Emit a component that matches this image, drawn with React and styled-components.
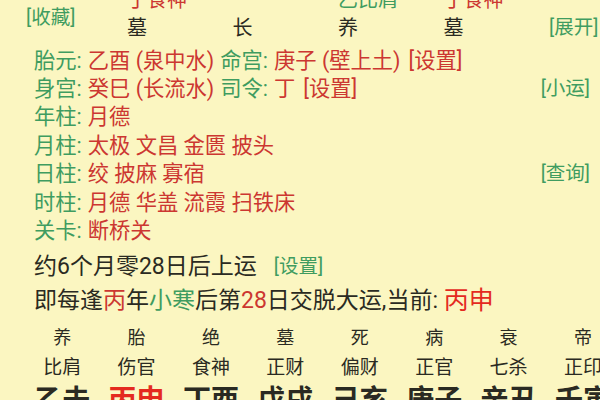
import React from "react";
import styled, { createGlobalStyle } from "styled-components";

const Global = createGlobalStyle`
  html, body { margin: 0; padding: 0; background: #fbf6c1; }
  body { font-family: Roboto, "Noto Sans CJK SC", sans-serif; overflow: hidden; }
`;

const C = {
  green: "#3f9c60",
  red: "#cc3731",
  bright: "#e42a1f",
  dark: "#2a2a22",
};

const Page = styled.div`
  width: 600px;
  height: 400px;
  overflow: hidden;
  background: #fbf6c1;
  color: ${C.dark};
`;

const Header = styled.div`
  display: grid;
  grid-template-columns: 127px repeat(4, 105.5px) 1fr;
  grid-template-rows: 28px 28px;
  margin-top: -14px;
  font-size: 20px;
  line-height: 28px;
`;

const Cell = styled.div`
  color: ${(p) => p.$color || C.dark};
  white-space: nowrap;
  grid-column: ${(p) => p.$col};
  grid-row: ${(p) => p.$row};
`;

const SideLink = styled.div`
  color: ${C.green};
  font-size: 19.5px;
  line-height: 28px;
  white-space: nowrap;
  grid-column: ${(p) => p.$col};
  grid-row: 1 / 3;
  align-self: end;
  justify-self: ${(p) => p.$justify};
  padding: ${(p) => p.$pad};
`;

const Info = styled.div`
  margin-top: 2px;
  display: flex;
  flex-direction: column;
`;

const Row = styled.div`
  display: flex;
  align-items: center;
  justify-content: space-between;
  height: 28.4px;
  padding: 0 10px 0 34px;
  font-size: 21.3px;
  white-space: nowrap;
`;

const Line = styled.div`
  display: flex;
  align-items: center;
`;

const Label = styled.span`
  color: ${C.green};
  margin-right: 6px;
`;

const Value = styled.span`
  color: ${C.red};
  margin-right: 6px;
`;

const RightLink = styled.span`
  color: ${C.green};
  font-size: 19.5px;
`;

const Setting = styled.span`
  color: ${(p) => p.$color};
  font-size: ${(p) => p.$size || 21.3}px;
  margin-left: ${(p) => p.$ml || 0}px;
`;

const Luck = styled.div`
  margin-top: ${(p) => p.$mt}px;
  padding-left: 34px;
  font-size: 23px;
  line-height: 32px;
  white-space: nowrap;
  display: flex;
  align-items: center;
`;

const Hl = styled.span`
  color: ${(p) => p.$color};
  font-size: ${(p) => (p.$size ? `${p.$size}px` : "inherit")};
`;

const Grid = styled.div`
  display: grid;
  grid-template-columns: repeat(8, 74.4px);
  padding-left: 25px;
  margin-top: ${(p) => p.$mt}px;
  font-size: ${(p) => p.$size}px;
  font-weight: ${(p) => p.$weight || 400};
  line-height: ${(p) => p.$lh}px;
`;

const GCell = styled.div`
  text-align: center;
  white-space: nowrap;
  color: ${(p) => p.$color || C.dark};
`;

const info = [
  {
    parts: [
      ["胎元:", "乙酉 (泉中水)"],
      ["命宫:", "庚子 (壁上土)"],
    ],
    setting: true,
  },
  {
    parts: [
      ["身宫:", "癸巳 (长流水)"],
      ["司令:", "丁"],
    ],
    setting: true,
    right: "[小运]",
  },
  { parts: [["年柱:", "月德"]] },
  { parts: [["月柱:", "太极 文昌 金匮 披头"]] },
  { parts: [["日柱:", "绞 披麻 寡宿"]], right: "[查询]" },
  { parts: [["时柱:", "月德 华盖 流霞 扫铁床"]] },
  { parts: [["关卡:", "断桥关"]] },
];

const stages = ["养", "胎", "绝", "墓", "死", "病", "衰", "帝"];
const gods = ["比肩", "伤官", "食神", "正财", "偏财", "正官", "七杀", "正印"];
const pillars = ["乙未", "丙申", "丁酉", "戊戌", "己亥", "庚子", "辛丑", "壬寅"];

export default function App() {
  return (
    <Page>
      <Global />
      <Header>
        <SideLink $col={1} $justify="start" $pad="0 0 10px 26px">[收藏]</SideLink>
        <Cell $col={2} $row={1} $color={C.red}>丁食神</Cell>
        <Cell $col={4} $row={1} $color={C.green}>乙比肩</Cell>
        <Cell $col={5} $row={1} $color={C.red}>丁食神</Cell>
        <Cell $col={2} $row={2}>墓</Cell>
        <Cell $col={3} $row={2}>长</Cell>
        <Cell $col={4} $row={2}>养</Cell>
        <Cell $col={5} $row={2}>墓</Cell>
        <SideLink $col={6} $justify="end" $pad="0 10px 0 0">[展开]</SideLink>
      </Header>
      <Info>
        {info.map((r, i) => (
          <Row key={i}>
            <Line>
              {r.parts.map(([l, v], j) => (
                <React.Fragment key={j}>
                  <Label>{l}</Label>
                  <Value>{v}</Value>
                </React.Fragment>
              ))}
              {r.setting && <Setting $color={C.red} $ml={2}>[设置]</Setting>}
            </Line>
            {r.right && <RightLink>{r.right}</RightLink>}
          </Row>
        ))}
      </Info>
      <Luck $mt={8}>
        约6个月零28日后上运
        <Setting $color={C.green} $size={19.5} $ml={17}>[设置]</Setting>
      </Luck>
      <Luck $mt={2}>
        即每逢<Hl $color={C.red}>丙</Hl>年<Hl $color={C.green}>小寒</Hl>后第
        <Hl $color={C.red}>28</Hl>日交脱大运,当前:&nbsp;
        <Hl $color={C.bright} $size={25}>丙申</Hl>
      </Luck>
      <Grid $mt={6} $size={18} $lh={30}>
        {stages.map((s, i) => (
          <GCell key={i}>{s}</GCell>
        ))}
      </Grid>
      <Grid $mt={0} $size={19} $lh={30}>
        {gods.map((s, i) => (
          <GCell key={i}>{s}</GCell>
        ))}
      </Grid>
      <Grid $mt={0} $size={28} $weight={700} $lh={36}>
        {pillars.map((s, i) => (
          <GCell key={i} $color={i === 1 ? C.bright : C.dark}>{s}</GCell>
        ))}
      </Grid>
    </Page>
  );
}
